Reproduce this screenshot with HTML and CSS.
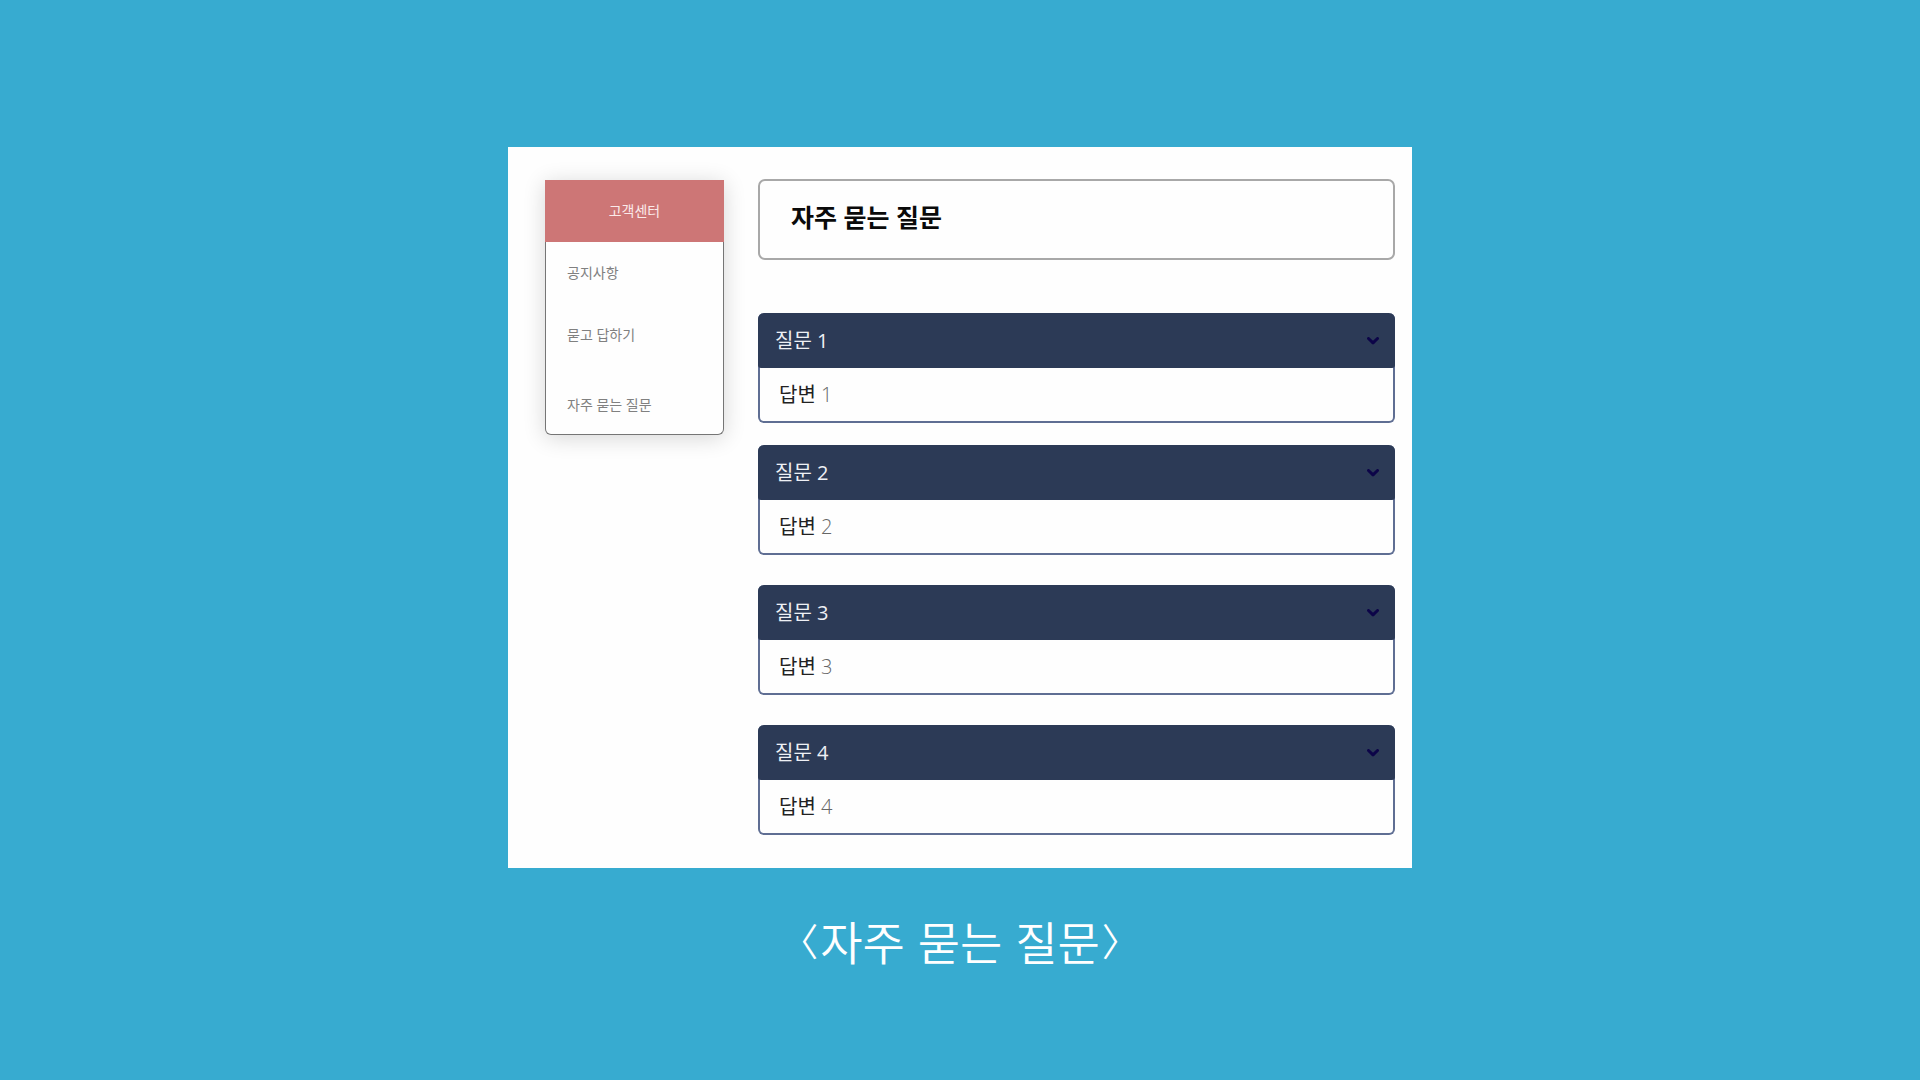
FILE: index.html
```html
<!DOCTYPE html>
<html lang="ko">
<head>
<meta charset="utf-8">
<meta name="viewport" content="width=device-width, initial-scale=1">
<title>자주 묻는 질문</title>
<link rel="stylesheet" href="styles.css">
</head>
<body>
<figure class="slide">
  <div class="panel">
    <nav class="sidebar" aria-label="고객센터">
      <h2 class="sidebar-title">고객센터</h2>
      <ul class="menu">
        <li><a class="menu-link" href="#notice">공지사항</a></li>
        <li><a class="menu-link" href="#qna">묻고 답하기</a></li>
        <li class="menu-last"><a class="menu-link" href="#faq">자주 묻는 질문</a></li>
      </ul>
    </nav>
    <main class="content" id="faq">
      <h1 class="title">자주 묻는 질문</h1>
      <div class="faq-list">
        <details class="faq" open>
          <summary class="question"><span>질문 1</span><svg class="chevron" viewBox="0 0 12 8" aria-hidden="true"><path d="M1.5 1.5 6 5.8 10.5 1.5"/></svg></summary>
          <p class="answer">답변 <span class="number">1</span></p>
        </details>
        <details class="faq" open>
          <summary class="question"><span>질문 2</span><svg class="chevron" viewBox="0 0 12 8" aria-hidden="true"><path d="M1.5 1.5 6 5.8 10.5 1.5"/></svg></summary>
          <p class="answer">답변 <span class="number">2</span></p>
        </details>
        <details class="faq" open>
          <summary class="question"><span>질문 3</span><svg class="chevron" viewBox="0 0 12 8" aria-hidden="true"><path d="M1.5 1.5 6 5.8 10.5 1.5"/></svg></summary>
          <p class="answer">답변 <span class="number">3</span></p>
        </details>
        <details class="faq" open>
          <summary class="question"><span>질문 4</span><svg class="chevron" viewBox="0 0 12 8" aria-hidden="true"><path d="M1.5 1.5 6 5.8 10.5 1.5"/></svg></summary>
          <p class="answer">답변 <span class="number">4</span></p>
        </details>
      </div>
    </main>
  </div>
  <figcaption class="caption"><span class="bracket">〈</span><span>자주 묻는 질문</span><span class="bracket">〉</span></figcaption>
</figure>
</body>
</html>
```
FILE: styles.css
```css
* {
  box-sizing: border-box;
}

body {
  margin: 0;
  min-height: 100vh;
  background: #37abd0;
  font-family: "Open Sans", "Noto Sans CJK KR", sans-serif;
}

h1, h2, p, ul, figure {
  margin: 0;
  padding: 0;
}

.slide {
  display: flex;
  flex-direction: column;
  align-items: center;
  gap: 37px;
  padding: 147px 16px 40px;
}

.panel {
  display: flex;
  align-items: flex-start;
  gap: 34px;
  width: 100%;
  max-width: 904px;
  padding: 32px 17px 33px 37px;
  background: #fefefe;
}

.sidebar {
  flex: 0 0 179px;
  margin-top: 1px;
  border-radius: 0 0 6px 6px;
  box-shadow: 0 3px 22px rgba(0, 0, 0, 0.16);
}

.sidebar-title {
  background: #cd7676;
  color: #fbeaea;
  font-size: 14px;
  font-weight: 400;
  line-height: 62px;
  text-align: center;
}

.menu {
  display: flex;
  flex-direction: column;
  gap: 40px;
  padding: 20px 21px 18px;
  border: 1px solid #757575;
  border-top: 0;
  border-radius: 0 0 6px 6px;
  background: #fefefe;
  list-style: none;
}

.menu-last {
  padding-top: 8px;
}

.menu-link {
  display: block;
  color: #808080;
  font-size: 14px;
  line-height: 22px;
  text-decoration: none;
}

.content {
  flex: 1;
  min-width: 0;
}

.title {
  padding: 18px 31px 23px;
  border: 2px solid #a8a8a8;
  border-radius: 7px;
  color: #0a0a0a;
  font-size: 25px;
  font-weight: 700;
  line-height: 36px;
}

.faq-list {
  display: flex;
  flex-direction: column;
  gap: 30px;
  margin-top: 53px;
}

.faq:first-child {
  margin-bottom: -8px;
}

.faq {
  border: 2px solid #5f6e93;
  border-top: 0;
  border-radius: 6px;
  font-size: 20px;
}

.question {
  display: flex;
  align-items: center;
  justify-content: space-between;
  margin: 0 -2px;
  padding: 1px 16px 0 17px;
  border-radius: 6px 6px 3px 3px;
  background: #2c3a56;
  color: #eef0f5;
  line-height: 54px;
  cursor: pointer;
  list-style: none;
}

.chevron {
  width: 12px;
  height: 8px;
  fill: none;
  stroke: #0c0448;
  stroke-width: 3;
  stroke-linecap: round;
  stroke-linejoin: round;
}

.answer {
  padding: 0 19px;
  color: #222;
  line-height: 53px;
}

.number {
  color: #666;
  font-weight: 300;
}

.caption {
  display: flex;
  align-items: center;
  gap: 2px;
  color: #fff;
  font-family: "Noto Sans CJK KR", sans-serif;
  font-feature-settings: "halt";
  font-size: 46px;
  font-weight: 350;
  line-height: 70px;
}

.bracket {
  font-size: 38px;
}
```
